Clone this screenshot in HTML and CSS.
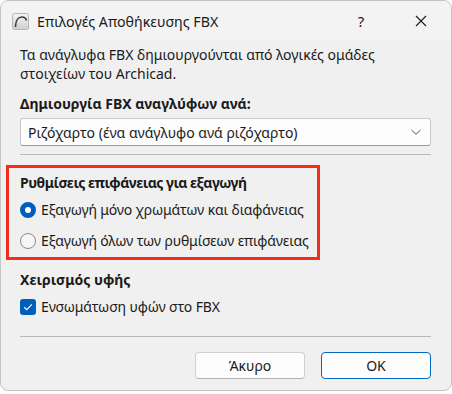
FILE: index.html
```html
<!DOCTYPE html>
<html lang="el">
<head>
<meta charset="utf-8">
<link rel="stylesheet" href="styles.css">
</head>
<body>
<div class="window">
  <div class="titlebar">
    <svg class="app-icon" width="17" height="17" viewBox="0 0 17 17">
      <defs>
        <linearGradient id="g" x1="0" y1="0" x2="0" y2="1">
          <stop offset="0" stop-color="#f4f4f4"/>
          <stop offset="1" stop-color="#cfcfcf"/>
        </linearGradient>
      </defs>
      <rect x="0.5" y="0.5" width="16" height="16" rx="2" fill="url(#g)" stroke="#b5b5b5"/>
      <path d="M3.5 14 C3.5 7 6.5 4 10 4 C12.5 4 14 5.5 14.5 7.5" fill="none" stroke="#3a3a3a" stroke-width="1.6"/>
    </svg>
    <span class="title">Επιλογές Αποθήκευσης FBX</span>
    <span class="help">?</span>
    <svg class="close" width="12" height="12" viewBox="0 0 12 12">
      <path d="M1 1 L11 11 M11 1 L1 11" stroke="#1a1a1a" stroke-width="1.1"/>
    </svg>
  </div>
  <div class="content">
    <p class="intro">Τα ανάγλυφα FBX δημιουργούνται από λογικές ομάδες στοιχείων του Archicad.</p>
    <div class="label bold">Δημιουργία FBX αναγλύφων ανά:</div>
    <div class="combo">
      <span>Ριζόχαρτο (ένα ανάγλυφο ανά ριζόχαρτο)</span>
      <svg width="12" height="8" viewBox="0 0 12 8"><path d="M1.5 2 L6 6.2 L10.5 2" fill="none" stroke="#555" stroke-width="1"/></svg>
    </div>
    <div class="sep sep1"></div>
    <div class="highlight">
      <div class="label bold tight">Ρυθμίσεις επιφάνειας για εξαγωγή</div>
      <div class="option opt1"><span class="radio on"></span><span class="narrow">Εξαγωγή μόνο χρωμάτων και διαφάνειας</span></div>
      <div class="option opt2"><span class="radio"></span><span class="narrow">Εξαγωγή όλων των ρυθμίσεων επιφάνειας</span></div>
    </div>
    <div class="label bold tex">Χειρισμός υφής</div>
    <div class="option chk"><span class="check"><svg width="10" height="8" viewBox="0 0 10 8"><path d="M1.2 4.2 L3.8 6.6 L8.8 1.4" fill="none" stroke="#fff" stroke-width="1.2"/></svg></span><span class="narrow">Ενσωμάτωση υφών στο FBX</span></div>
    <div class="sep sep2"></div>
    <div class="buttons">
      <button class="btn">Άκυρο</button>
      <button class="btn default">OK</button>
    </div>
  </div>
</div>
</body>
</html>
```
FILE: styles.css
```css
* { box-sizing: border-box; }
html, body { margin: 0; padding: 0; }
body {
  background: #ffffff;
  font-family: "Noto Sans", "Open Sans", sans-serif;
  font-size: 14px;
  color: #1b1b1b;
}
.window {
  width: 452px;
  height: 391px;
  background: #f0f0f0;
  border: 1px solid #c4c4c4;
  border-radius: 8px;
  overflow: hidden;
}
.titlebar {
  height: 40px;
  display: flex;
  align-items: center;
  background: #f3f3f3;
  padding-left: 11px;
}
.app-icon { flex: none; }
.title {
  margin-left: 8px;
  font-size: 14.2px;
  flex: 1;
}
.help {
  font-size: 15px;
  width: 20px;
  text-align: center;
  margin-right: 44px;
}
.close { margin-right: 24px; }
.content { padding: 4px 20px 0 19px; }
.intro {
  margin: 0;
  line-height: 19px;
  width: 360px;
}
.label {
  line-height: 19px;
}
.bold { font-weight: 700; }
.tight { letter-spacing: -0.5px; }
.narrow { letter-spacing: -0.15px; }
.content > .label:first-of-type { margin-top: 11px; }
.combo {
  margin-top: 5px;
  height: 28px;
  background: #fdfdfd;
  border: 1px solid #c9c9c9;
  border-bottom-color: #9a9a9a;
  border-radius: 3px;
  display: flex;
  align-items: center;
  justify-content: space-between;
  padding: 0 8px 0 7px;
}
.sep { height: 1px; background: #b9b9b9; }
.sep1 { margin-top: 8px; }
.highlight {
  margin: 10px 0 0 -14px;
  width: 314px;
  height: 95px;
  border: 3px solid #f42c1c;
  padding: 5px 0 0 11px;
}
.option {
  display: flex;
  align-items: center;
  height: 19px;
}
.opt1 { margin-top: 8px; }
.opt2 { margin-top: 12px; }
.radio {
  width: 16px;
  height: 16px;
  border-radius: 50%;
  border: 1px solid #8a8a8a;
  background: #f6f6f6;
  margin-right: 5px;
  flex: none;
}
.radio.on {
  border: 5px solid #005fb8;
  background: #ffffff;
}
.tex { margin-top: 10px; }
.chk { margin-top: 8px; }
.check {
  width: 16px;
  height: 16px;
  border-radius: 3px;
  background: #005fb8;
  display: flex;
  align-items: center;
  justify-content: center;
  margin-right: 5px;
  flex: none;
}
.sep2 { margin-top: 20px; }
.buttons {
  display: flex;
  justify-content: flex-end;
  gap: 16px;
  margin-top: 15px;
}
.btn {
  width: 110px;
  height: 27px;
  font-family: inherit;
  font-size: 14px;
  color: #1b1b1b;
  background: #fdfdfd;
  border: 1px solid #d0d0d0;
  border-bottom-color: #b5b5b5;
  border-radius: 4px;
  padding: 0;
}
.btn.default {
  border: 1px solid #0067c0;
}
```
